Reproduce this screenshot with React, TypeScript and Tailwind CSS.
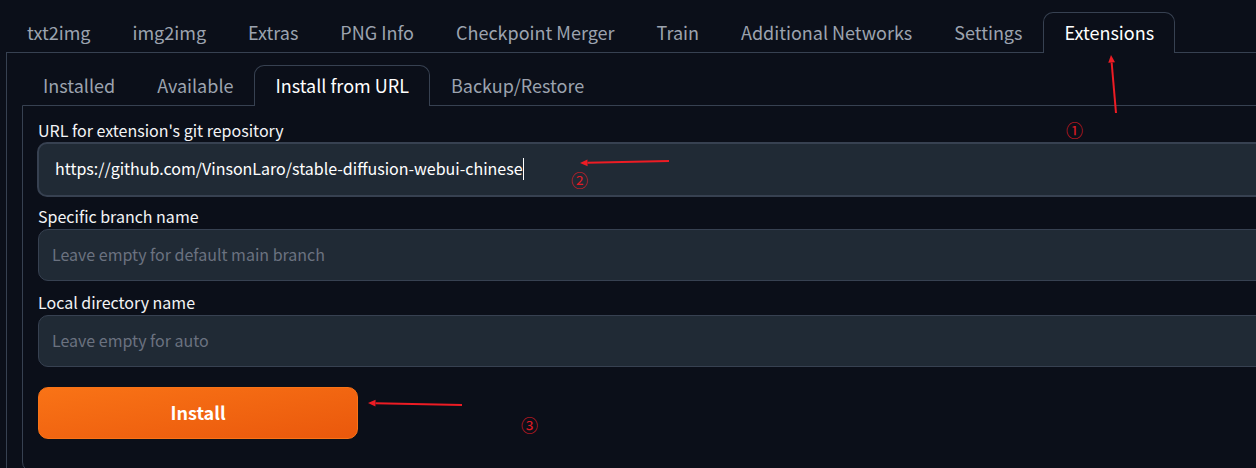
import { useState } from "react";

const mainTabs = [
  "txt2img",
  "img2img",
  "Extras",
  "PNG Info",
  "Checkpoint Merger",
  "Train",
  "Additional Networks",
  "Settings",
  "Extensions",
];

const extensionTabs = ["Installed", "Available", "Install from URL", "Backup/Restore"];

function TabBar({ tabs, active, label }: { tabs: string[]; active: string; label: string }) {
  return (
    <div role="tablist" aria-label={label} className="flex">
      {tabs.map((tab) => (
        <button
          key={tab}
          type="button"
          role="tab"
          aria-selected={tab === active}
          className={
            tab === active
              ? "relative z-10 -mb-px h-[41px] shrink-0 rounded-t-[10px] border border-b-0 border-[#374151] bg-[#0b0f19] px-5 pb-0.5 whitespace-nowrap text-white"
              : "-mb-px h-[41px] shrink-0 border border-b-0 border-transparent px-5 pb-0.5 whitespace-nowrap text-[#9ca3af]"
          }
        >
          {tab}
        </button>
      ))}
    </div>
  );
}

function Arrow({ x1, y1, x2, y2 }: { x1: number; y1: number; x2: number; y2: number }) {
  const length = Math.hypot(x2 - x1, y2 - y1);
  const ux = (x2 - x1) / length;
  const uy = (y2 - y1) / length;
  const bx = x2 - ux * 7.5;
  const by = y2 - uy * 7.5;
  return (
    <g>
      <line x1={x1} y1={y1} x2={bx} y2={by} stroke="#ed1c24" strokeWidth="2" />
      <polygon
        points={`${x2},${y2} ${bx - uy * 3.4},${by + ux * 3.4} ${bx + uy * 3.4},${by - ux * 3.4}`}
        fill="#ed1c24"
      />
    </g>
  );
}

const labelClass = "mb-px block text-base leading-6 text-[#f3f4f6]";

const fieldClass =
  "block h-[52px] w-full rounded-[10px] border border-[#374151] bg-[#202a35] px-[13px] pb-[3px] text-base text-[#f3f4f6] outline-none placeholder:text-[#6b7280]";

export default function App() {
  const [url, setUrl] = useState("https://github.com/VinsonLaro/stable-diffusion-webui-chinese");

  return (
    <main className="relative h-screen overflow-hidden bg-[#0b0f19] pt-3 pl-1.5 font-['Noto_Sans_CJK_SC',sans-serif] text-[18px] leading-6">
      <TabBar tabs={mainTabs} active="Extensions" label="Main sections" />
      <section className="-mr-12 border border-[#374151] px-[15px] pt-3 pb-4">
        <TabBar tabs={extensionTabs} active="Install from URL" label="Extension pages" />
        <form
          className="rounded-b-[10px] border border-[#374151] px-[15px] pt-3 pb-8"
          onSubmit={(event) => event.preventDefault()}
        >
          <div className="flex flex-col gap-[9px]">
            <div>
              <label htmlFor="url" className={labelClass}>
                URL for extension's git repository
              </label>
              <div className="relative -mx-px -mt-px -mb-0.5">
                <input
                  id="url"
                  value={url}
                  onChange={(event) => setUrl(event.target.value)}
                  className="block h-[55px] w-full rounded-[10px] border-2 border-[#374151] bg-[#202a35] px-4 pb-[3px] text-base text-white outline-none"
                />
                <span className="absolute top-4 left-[486px] h-[22px] w-px bg-white" />
              </div>
            </div>
            <div>
              <label htmlFor="branch" className={labelClass}>
                Specific branch name
              </label>
              <input id="branch" placeholder="Leave empty for default main branch" className={fieldClass} />
            </div>
            <div>
              <label htmlFor="directory" className={labelClass}>
                Local directory name
              </label>
              <input id="directory" placeholder="Leave empty for auto" className={fieldClass} />
            </div>
          </div>
          <button
            type="submit"
            className="mt-5 h-[52px] w-80 rounded-[10px] border border-[#f97316] bg-linear-to-br from-[#f97316] to-[#ea580c] pb-0.5 font-bold text-white"
          >
            Install
          </button>
        </form>
      </section>

      <svg className="pointer-events-none absolute top-0 left-0 z-20 h-[468px] w-[1256px]" aria-hidden="true">
        <Arrow x1={1116} y1={113} x2={1111} y2={55} />
        <Arrow x1={669} y1={161} x2={580} y2={163} />
        <Arrow x1={462} y1={405} x2={368} y2={403} />
      </svg>
      <span className="absolute top-[118px] left-[1066px] z-20 text-[17px] text-[#e01b24]">①</span>
      <span className="absolute top-[168px] left-[571px] z-20 text-[17px] text-[#e01b24]">②</span>
      <span className="absolute top-[413px] left-[521px] z-20 text-[17px] text-[#e01b24]">③</span>
    </main>
  );
}
